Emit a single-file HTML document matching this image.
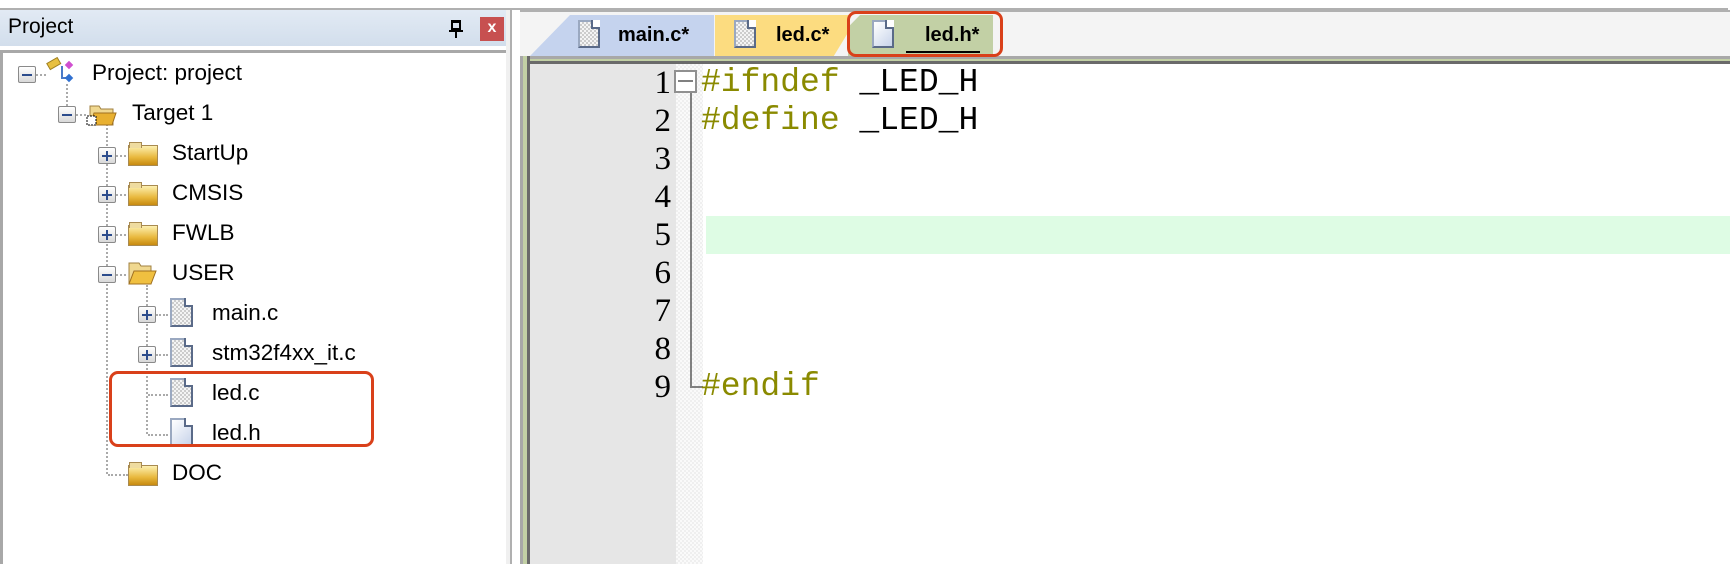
<!DOCTYPE html>
<html><head><meta charset="utf-8"><style>
*{margin:0;padding:0;box-sizing:border-box}
body{width:1730px;height:564px;overflow:hidden;background:#fff;position:relative;font-family:"Liberation Sans",sans-serif}
.a{position:absolute}
.t{position:absolute;font-size:22.5px;color:#000;line-height:24px;white-space:nowrap}
.box{position:absolute;width:18px;height:17px;border:1px solid #8a8a8a;background:linear-gradient(#fff,#d8d8d8);border-radius:2px}
.box:before{content:"";position:absolute;left:3px;top:7px;width:10px;height:2px;background:#2c4c8c}
.box.p:after{content:"";position:absolute;left:7px;top:3px;width:2px;height:10px;background:#2c4c8c}
.hd{position:absolute;border-top:2px dotted #aaa;height:0}
.vd{position:absolute;border-left:2px dotted #aaa;width:0}
.fold{position:absolute;width:28px;height:22px}
.fold:before{content:"";position:absolute;left:0;top:3px;width:28px;height:19px;background:linear-gradient(#fdf0b0,#e8b83c 60%,#c88a10);border:1px solid #a88a50}
.fold:after{content:"";position:absolute;left:1px;top:0;width:11px;height:5px;background:#efdca0;border:1px solid #a88a50;border-bottom:none}
.file{position:absolute;width:23px;height:29px;background:linear-gradient(135deg,#fff,#c8d4ea);border:2px solid #5a6a88;border-top-color:#9aa8c0;border-left-color:#9aa8c0}
.file.c{background-image:repeating-conic-gradient(#ccc 0 25%,#f4f4f4 0 50%);background-size:4px 4px}
.file:after{content:"";position:absolute;right:-2px;top:-2px;width:7px;height:7px;background:#fff;border-left:2px solid #5a6a88;border-bottom:2px solid #5a6a88}
.ln{position:absolute;left:530px;width:141px;text-align:right;font-family:"Liberation Serif",serif;font-size:33px;line-height:38px;color:#000}
.code{position:absolute;left:701px;font-family:"Liberation Mono",monospace;font-size:33px;letter-spacing:0px;line-height:38px;white-space:pre;color:#000}
.k{color:#8a8a00}
.tab{position:absolute;top:15px;height:41px;font-size:20px;font-weight:bold;line-height:40px}
</style></head><body>
<div class="a" style="left:0;top:0;width:1730px;height:9px;background:#fff"></div>
<div class="a" style="left:0;top:8px;width:1728px;height:2px;background:#b0b0b0"></div>
<div class="a" style="left:0;top:10px;width:512px;height:36px;background:linear-gradient(#e2eaf4,#d2deec)"></div>
<div class="t" style="left:8px;top:15px;font-size:21px">Project</div>
<div class="a" style="left:451px;top:20px;width:10px;height:10px;border:2px solid #000;border-top-width:3px"></div>
<div class="a" style="left:449px;top:30px;width:14px;height:2px;background:#000"></div>
<div class="a" style="left:455px;top:32px;width:2px;height:6px;background:#000"></div>
<div class="a" style="left:480px;top:17px;width:24px;height:24px;background:#c75050;color:#fff;font-size:16px;font-weight:bold;text-align:center;line-height:22px">x</div>
<div class="a" style="left:0;top:50px;width:512px;height:514px;border:3px solid #a8a8a8;border-bottom:none;border-right-width:4px;background:#fff"></div>

<div class="vd" style="left:66px;top:84px;height:22px"></div>
<div class="vd" style="left:106px;top:124px;height:350px"></div>
<div class="vd" style="left:146px;top:285px;height:149px"></div>
<div class="hd" style="left:36px;top:74px;width:10px"></div>
<div class="hd" style="left:76px;top:114px;width:10px"></div>
<div class="hd" style="left:116px;top:155px;width:10px"></div>
<div class="hd" style="left:116px;top:194px;width:10px"></div>
<div class="hd" style="left:116px;top:234px;width:10px"></div>
<div class="hd" style="left:116px;top:274px;width:10px"></div>
<div class="hd" style="left:156px;top:314px;width:12px"></div>
<div class="hd" style="left:156px;top:354px;width:12px"></div>
<div class="hd" style="left:148px;top:394px;width:20px"></div>
<div class="hd" style="left:148px;top:434px;width:20px"></div>
<div class="hd" style="left:108px;top:474px;width:20px"></div>

<div class="box" style="left:18px;top:66px"></div>
<div class="box" style="left:58px;top:106px"></div>
<div class="box p" style="left:98px;top:147px"></div>
<div class="box p" style="left:98px;top:186px"></div>
<div class="box p" style="left:98px;top:226px"></div>
<div class="box" style="left:98px;top:266px"></div>
<div class="box p" style="left:138px;top:306px"></div>
<div class="box p" style="left:138px;top:346px"></div>

<svg class="a" style="left:46px;top:56px" width="32" height="30"><rect x="2" y="4" width="12" height="7" fill="#e8c040" stroke="#a08020" transform="rotate(-30 8 8)"/><path d="M16 10v12h6" stroke="#4a7ac8" stroke-width="2" fill="none"/><rect x="20" y="6" width="6" height="6" fill="#d050d0" transform="rotate(45 23 9)"/><rect x="20" y="19" width="6" height="6" fill="#3070d0" transform="rotate(45 23 22)"/></svg>
<div class="t" style="left:92px;top:61px">Project: project</div>
<svg class="a" style="left:86px;top:100px" width="32" height="28"><path d="M4 6h9l2 3h12v16H4z" fill="#f0d890" stroke="#a08040"/><path d="M8 13h22l-4 12H4z" fill="#e8b030" stroke="#a07020"/><rect x="1" y="16" width="9" height="9" fill="#fff" stroke="#000" stroke-dasharray="2 1"/></svg>
<div class="t" style="left:132px;top:101px">Target 1</div>
<div class="fold" style="left:128px;top:142px"></div><div class="t" style="left:172px;top:141px">StartUp</div>
<div class="fold" style="left:128px;top:182px"></div><div class="t" style="left:172px;top:181px">CMSIS</div>
<div class="fold" style="left:128px;top:222px"></div><div class="t" style="left:172px;top:221px">FWLB</div>
<svg class="a" style="left:128px;top:260px" width="30" height="26"><path d="M1 3h10l2 3h10v18H1z" fill="#f0d890" stroke="#a08040"/><path d="M6 11h22l-5 13H1z" fill="#f0c040" stroke="#a07020"/></svg>
<div class="t" style="left:172px;top:261px">USER</div>
<div class="file c" style="left:170px;top:298px"></div><div class="t" style="left:212px;top:301px">main.c</div>
<div class="file c" style="left:170px;top:338px"></div><div class="t" style="left:212px;top:341px">stm32f4xx_it.c</div>
<div class="file c" style="left:170px;top:378px"></div><div class="t" style="left:212px;top:381px">led.c</div>
<div class="file" style="left:170px;top:418px;height:28px"></div><div class="t" style="left:212px;top:421px">led.h</div>
<div class="fold" style="left:128px;top:462px"></div><div class="t" style="left:172px;top:461px">DOC</div>
<div class="a" style="left:109px;top:371px;width:265px;height:76px;border:3px solid #d9401a;border-radius:9px"></div>

<div class="a" style="left:506px;top:10px;width:4px;height:554px;background:#f0f0f0"></div>
<div class="a" style="left:510px;top:10px;width:2px;height:554px;background:#b0b0b0"></div>
<div class="a" style="left:520px;top:10px;width:1210px;height:47px;background:#f4f4f4;border-top:2px solid #b0b0b0"></div>
<div class="a" style="left:520px;top:56px;width:1210px;height:3px;background:#a8a8a8"></div>
<div class="a" style="left:520px;top:59px;width:1210px;height:2px;background:#c2d0a5"></div>
<div class="a" style="left:520px;top:61px;width:1210px;height:3px;background:#6a6a6a"></div>
<div class="a" style="left:520px;top:56px;width:3px;height:508px;background:#a8a8a8"></div>
<div class="a" style="left:523px;top:56px;width:4px;height:508px;background:#c2d0a5"></div>
<div class="a" style="left:527px;top:56px;width:3px;height:508px;background:#6a6a6a"></div>
<div class="a" style="left:530px;top:64px;width:146px;height:500px;background:#e6e6e6"></div>
<div class="a" style="left:676px;top:64px;width:27px;height:500px;background:repeating-conic-gradient(#efefef 0 25%,#fafafa 0 50%);background-size:4px 4px"></div>

<div class="tab" style="left:530px;width:184px;background:#c5d3ee;clip-path:polygon(0 100%,40px 0,100% 0,100% 100%)"></div>
<div class="file c" style="left:578px;top:20px;width:22px;height:28px"></div>
<div class="tab" style="left:618px">main.c*</div>
<div class="tab" style="left:715px;width:135px;background:#fcdc80;clip-path:polygon(0 0,100% 0,100% 35%,88% 100%,0 100%)"></div>
<div class="file c" style="left:734px;top:20px;width:22px;height:28px"></div>
<div class="tab" style="left:776px">led.c*</div>
<div class="tab" style="left:848px;width:145px;background:#c2d0a5;clip-path:polygon(0 30%,12px 0,100% 0,100% 100%,0 100%)"></div>
<div class="file" style="left:872px;top:20px;width:22px;height:28px"></div>
<div class="tab" style="left:925px">led.h*</div>
<div class="a" style="left:906px;top:51px;width:74px;height:2px;background:#000"></div>
<div class="a" style="left:847px;top:11px;width:156px;height:46px;border:3px solid #d9401a;border-radius:9px"></div>

<div class="a" style="left:706px;top:216px;width:1024px;height:38px;background:#defce4"></div>
<div class="ln" style="top:64px">1<br>2<br>3<br>4<br>5<br>6<br>7<br>8<br>9</div>
<div class="a" style="left:690px;top:92px;width:2px;height:296px;background:#808080"></div>
<div class="a" style="left:690px;top:386px;width:13px;height:2px;background:#808080"></div>
<div class="a" style="left:674px;top:70px;width:23px;height:23px;border:2px solid #909090;background:#fff"></div>
<div class="a" style="left:678px;top:80px;width:15px;height:2px;background:#808080"></div>
<div class="code" style="top:64px"><span class="k">#ifndef</span> _LED_H
<span class="k">#define</span> _LED_H






<span class="k">#endif</span></div>
</body></html>
